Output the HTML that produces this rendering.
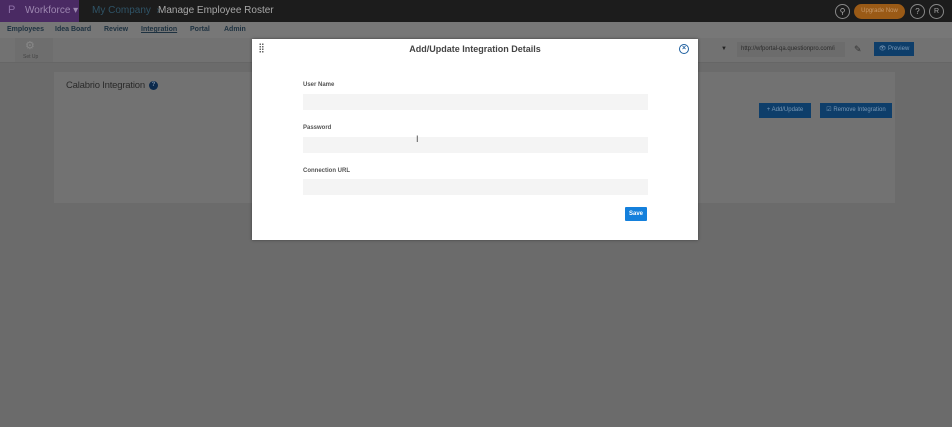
<!DOCTYPE html>
<html><head><style>
*{box-sizing:border-box;margin:0;padding:0}
body{width:952px;height:427px;background:#6b6b6b;font-family:"Liberation Sans",sans-serif;position:relative;overflow:hidden}
.a{position:absolute}
.n{font-size:7px;color:#1d3140;font-weight:bold}
</style></head><body>
<div class="a" style="left:0;top:0;width:952px;height:22px;background:#1c1c1c"></div>
<div class="a" style="left:0;top:0;width:79px;height:22px;background:#4a2a63"></div>
<div class="a" style="left:8px;top:4px;font-size:11px;color:#8d6fa6">P</div>
<div class="a" style="left:25px;top:5px;font-size:10px;color:#9d87b0">Workforce ▾</div>
<div class="a" style="left:92px;top:5px;font-size:10px;color:#2f5366">My Company &nbsp;›</div>
<div class="a" style="left:158px;top:5px;font-size:10px;color:#a8a8a8">Manage Employee Roster</div>
<div class="a" style="left:835px;top:4px;width:15px;height:15px;border-radius:50%;border:1px solid #888;color:#aaa;font-size:8px;text-align:center;line-height:13px">⚲</div>
<div class="a" style="left:854px;top:4px;width:51px;height:15px;border-radius:8px;background:#9a5a16;color:#c89a6a;font-size:6px;text-align:center;line-height:15px">Upgrade Now</div>
<div class="a" style="left:910px;top:4px;width:15px;height:15px;border-radius:50%;border:1px solid #888;color:#aaa;font-size:8px;text-align:center;line-height:13px">?</div>
<div class="a" style="left:929px;top:4px;width:15px;height:15px;border-radius:50%;border:1px solid #888;color:#aaa;font-size:7px;text-align:center;line-height:13px">R</div>
<div class="a" style="left:0;top:22px;width:952px;height:16px;background:#777"></div>
<div class="a n" style="left:7px;top:26px">Employees</div>
<div class="a n" style="left:55px;top:26px">Idea Board</div>
<div class="a n" style="left:104px;top:26px">Review</div>
<div class="a n" style="left:141px;top:26px;text-decoration:underline">Integration</div>
<div class="a n" style="left:190px;top:26px">Portal</div>
<div class="a n" style="left:224px;top:26px">Admin</div>
<div class="a" style="left:0;top:38px;width:952px;height:25px;background:#727272;border-bottom:1px solid #666"></div>
<div class="a" style="left:15px;top:38px;width:38px;height:24px;background:#6e6e6e"></div>
<div class="a" style="left:25px;top:39px;font-size:11px;color:#888">⚙</div>
<div class="a" style="left:23px;top:54px;font-size:5px;color:#444">Set Up</div>
<div class="a" style="left:721px;top:46px;font-size:6px;color:#222">▼</div>
<div class="a" style="left:737px;top:42px;width:108px;height:15px;background:#6c6c6c;font-size:6px;color:#2a2a2a;line-height:15px;padding-left:4px;white-space:nowrap;overflow:hidden">http://wfportal-qa.questionpro.com/i</div>
<div class="a" style="left:854px;top:44px;font-size:9px;color:#333">✎</div>
<div class="a" style="left:874px;top:42px;width:40px;height:14px;background:#0e3e6a;color:#7a98b5;font-size:6px;text-align:center;line-height:14px">👁 Preview</div>
<div class="a" style="left:54px;top:72px;width:841px;height:131px;background:#727272"></div>
<div class="a" style="left:66px;top:80px;font-size:9.5px;color:#2a2a2a;letter-spacing:-0.2px">Calabrio Integration</div>
<div class="a" style="left:149px;top:81px;width:9px;height:9px;border-radius:50%;background:#0c2a4c;color:#7a8ea5;font-size:6px;text-align:center;line-height:9px;font-weight:bold">?</div>
<div class="a" style="left:759px;top:103px;width:52px;height:15px;background:#0e3e6a;color:#7a98b5;font-size:6px;text-align:center;line-height:15px">+ Add/Update</div>
<div class="a" style="left:820px;top:103px;width:72px;height:15px;background:#0e3e6a;color:#7a98b5;font-size:6px;text-align:center;line-height:15px">☑ Remove Integration</div>
<div class="a" style="left:252px;top:39px;width:446px;height:201px;background:#fff;box-shadow:0 0 3px rgba(0,0,0,.4)">
<div class="a" style="left:7px;top:4px;width:5px;height:10px;background-image:radial-gradient(circle,#666 0.8px,transparent 1px);background-size:2.5px 2.5px"></div>
<div class="a" style="left:0;top:5px;width:446px;text-align:center;font-size:9px;font-weight:bold;color:#444">Add/Update Integration Details</div>
<div class="a" style="left:427px;top:5px;width:10px;height:10px;border-radius:50%;border:1.3px solid #1e5f9f;color:#1e5f9f;font-size:7px;line-height:8px;text-align:center;font-weight:bold">×</div>
<div class="a" style="left:51px;top:43px;font-size:6px;color:#555;font-weight:bold">User Name</div>
<div class="a" style="left:51px;top:55px;width:345px;height:16px;background:#f4f4f4"></div>
<div class="a" style="left:51px;top:86px;font-size:6px;color:#555;font-weight:bold">Password</div>
<div class="a" style="left:51px;top:98px;width:345px;height:16px;background:#f4f4f4"></div>
<div class="a" style="left:164px;top:95px;font-size:9px;color:#444">I</div>
<div class="a" style="left:51px;top:129px;font-size:6px;color:#555;font-weight:bold">Connection URL</div>
<div class="a" style="left:51px;top:140px;width:345px;height:16px;background:#f4f4f4"></div>
<div class="a" style="left:373px;top:168px;width:22px;height:14px;background:#1480dc;color:#fff;font-size:6px;text-align:center;line-height:14px;border-radius:1px;font-weight:bold">Save</div>
</div>
</body></html>
